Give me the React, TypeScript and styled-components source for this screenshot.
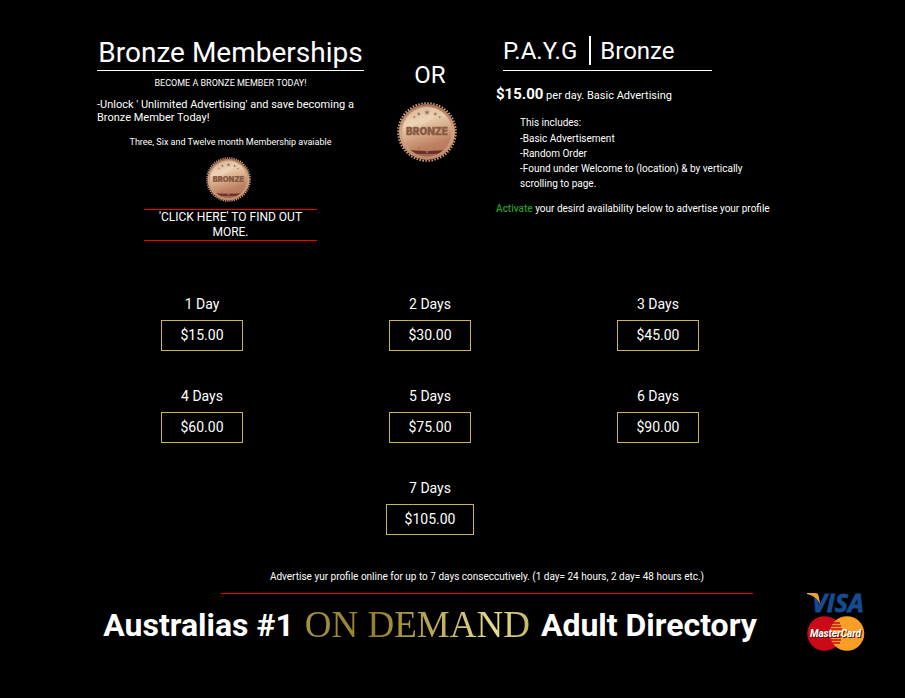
import React from "react";
import styled, { createGlobalStyle } from "styled-components";

const GlobalStyle = createGlobalStyle`
  *, *::before, *::after { box-sizing: border-box; }
  body {
    margin: 0;
    background: #000;
    color: #fff;
    font-family: Roboto, "Liberation Sans", sans-serif;
    font-size: 14px;
  }
  h1, h2, h3, p, ul { margin: 0; padding: 0; font-weight: 400; }
  ul { list-style: none; }
  svg { display: block; overflow: visible; }
`;

const Page = styled.div`
  display: grid;
  grid-template-columns: 88px minmax(0, 1fr) 133px;
  align-items: end;
  padding: 35px 0 45px;
`;

const Main = styled.main`
  grid-column: 2;
  padding-bottom: 8px;
`;

const Intro = styled.section`
  display: grid;
  grid-template-columns: minmax(0, 5fr) minmax(0, 2fr) minmax(0, 5fr);
  min-height: 259px;
`;

const Column = styled.div<{ $center?: boolean }>`
  display: flex;
  flex-direction: column;
  align-items: ${(p) => (p.$center ? "center" : "stretch")};
  padding: 0 9px;
`;

const Title = styled.h1`
  border-bottom: 1px solid #fff;
  font-size: 28px;
  line-height: 35px;
  text-align: center;
  white-space: nowrap;
`;

const Caption = styled.p<{ $top: number }>`
  margin-top: ${(p) => p.$top}px;
  font-size: 9px;
  line-height: 12px;
  text-align: center;
`;

const Pitch = styled.p`
  margin-top: 9px;
  font-size: 11px;
  line-height: 13px;
`;

const MedalSlot = styled.div<{ $top: number; $right: number }>`
  align-self: center;
  margin-top: ${(p) => p.$top}px;
  padding-right: ${(p) => p.$right}px;
`;

const MoreLink = styled.a`
  align-self: center;
  width: 65%;
  margin-top: 7px;
  border: solid #f00;
  border-width: 1px 0;
  color: #fff;
  font-size: 12px;
  line-height: 15px;
  text-align: center;
  text-decoration: none;
`;

const Or = styled.p`
  margin-top: 26px;
  font-size: 24px;
  line-height: 28px;
`;

const PlanTitle = styled.h2`
  display: flex;
  align-items: center;
  width: 209px;
  height: 36px;
  margin-left: 7px;
  padding-bottom: 4px;
  border-bottom: 1px solid #fff;
  font-size: 24px;
  line-height: 30px;
  white-space: nowrap;
`;

const Divider = styled.span`
  width: 2px;
  height: 29px;
  margin: 0 9px 0 12px;
  background: #fff;
`;

const Rate = styled.p`
  margin-top: 13px;
  font-size: 11px;
  line-height: 20px;
  strong { font-size: 15px; font-weight: 700; }
`;

const Includes = styled.div`
  margin: 9px 0 0 24px;
  font-size: 10px;
  line-height: 15px;
  ul { margin-top: 1px; }
`;

const Activate = styled.p`
  margin-top: 10px;
  font-size: 10px;
  line-height: 15px;
  white-space: nowrap;
  strong { color: #2a972a; font-weight: 500; }
`;

const Plans = styled.section`
  display: flex;
  flex-wrap: wrap;
  justify-content: center;
  row-gap: 35px;
`;

const Plan = styled.div`
  display: flex;
  flex: 0 0 33.333%;
  flex-direction: column;
  align-items: center;
  gap: 6px;
`;

const PlanName = styled.label`
  font-size: 14px;
  line-height: 20px;
`;

const PriceButton = styled.button`
  padding: 6px 18px;
  border: 1px solid #c9b458;
  background: #000;
  color: #fff;
  font: 14px/17px Roboto, "Liberation Sans", sans-serif;
  cursor: pointer;
`;

const Note = styled.p`
  width: 532px;
  max-width: 100%;
  margin: 34px 19px 12px auto;
  padding-bottom: 9px;
  border-bottom: 1px solid #f00;
  font-size: 10px;
  line-height: 15px;
  text-align: center;
`;

const Slogan = styled.h2`
  display: flex;
  align-items: center;
  justify-content: center;
  gap: 11px;
  font-size: 32px;
  font-weight: 700;
  line-height: 38px;
  white-space: nowrap;
`;

const Gold = styled.span`
  background: linear-gradient(90deg, #a8923e, #96802b 30%, #b8a755 55%, #e6dc91 85%, #c5b862);
  background-clip: text;
  -webkit-background-clip: text;
  color: transparent;
  font-family: "Liberation Serif", serif;
  font-size: 37px;
  font-weight: 400;
`;

const Payments = styled.aside`
  grid-column: 3;
  padding-left: 35px;
`;

const STAR = "M0-3.2 .8-1 3-1 1.2.4 1.9 2.6 0 1.3-1.9 2.6-1.2.4-3-1-.8-1Z";

function Medal({ size, id }: { size: number; id: string }) {
  return (
    <svg width={size} height={size} viewBox="0 0 60 60" role="img" aria-label="Bronze medal">
      <defs>
        <linearGradient id={`${id}-face`} x1="0.2" y1="0" x2="0.5" y2="1">
          <stop offset="0" stopColor="#c5997a" />
          <stop offset="0.3" stopColor="#e8cdb0" />
          <stop offset="0.5" stopColor="#dab18f" />
          <stop offset="0.8" stopColor="#bd8163" />
          <stop offset="1" stopColor="#b77757" />
        </linearGradient>
        <linearGradient id={`${id}-rim`} x1="0" y1="0" x2="0" y2="1">
          <stop offset="0" stopColor="#a96d50" />
          <stop offset="0.5" stopColor="#d9a986" />
          <stop offset="1" stopColor="#bd8465" />
        </linearGradient>
        <clipPath id={`${id}-clip`}>
          <circle cx="30" cy="30" r="24.5" />
        </clipPath>
      </defs>
      <circle cx="30" cy="30" r="28.8" fill="none" stroke="#d3a283" strokeWidth="2" strokeDasharray="1.5 1.516" />
      <circle cx="30" cy="30" r="28" fill={`url(#${id}-rim)`} />
      <circle cx="30" cy="30" r="25.3" fill={`url(#${id}-face)`} stroke="#b98567" strokeWidth="0.8" />
      <g clipPath={`url(#${id}-clip)`}>
        <path d="M4 25C12 29 33 25 43 6L30 3 4 13Z" fill="#f5e2c5" opacity="0.35" />
        <path d="M3 47Q30 51 57 47V60H3Z" fill="#672f2b" />
        <path d="M10 51Q30 53 50 51L45 55H15Z" fill="#9d6751" />
      </g>
      <circle cx="30" cy="30" r="25" fill="none" stroke="#edcfb3" strokeWidth="0.6" opacity="0.6" />
      <g fill="#a57455">
        <path d={STAR} transform="translate(30 10.5)" />
        <path d={STAR} transform="translate(21.8 12) scale(.7)" />
        <path d={STAR} transform="translate(38.2 12) scale(.7)" />
        <path d={STAR} transform="translate(17.3 15) scale(.5)" />
        <path d={STAR} transform="translate(42.7 15) scale(.5)" />
        <path d={STAR} transform="translate(30 50) scale(.6)" />
        <path d={STAR} transform="translate(22 46) scale(.4)" />
        <path d={STAR} transform="translate(38 46) scale(.4)" />
      </g>
      <text x="30" y="33" textAnchor="middle" fontFamily="Inter, sans-serif" fontWeight="900" fontSize="10" fill="#865a42" stroke="#865a42" strokeWidth="0.3">
        BRONZE
      </text>
    </svg>
  );
}

function CardLogos() {
  return (
    <svg width="58" height="60" viewBox="0 0 58 60" role="img" aria-label="Visa and MasterCard">
      <text x="5" y="20" fontFamily="Open Sans, sans-serif" fontWeight="700" fontStyle="italic" fontSize="25" fill="#164a91" stroke="#164a91" strokeWidth="0.8">
        VISA
      </text>
      <path d="M0 1H8Q11 1 11.5 4L13.5 13Q10 4 0 2Z" fill="#f2a32e" />
      <circle cx="17.5" cy="41.5" r="17.3" fill="#cb0a19" />
      <circle cx="40" cy="41.5" r="17.3" fill="#f99f27" />
      <path d="M24 31H33M23 34H34M23 37H35M23 45H35M23 48H34M24 51H33" stroke="#cb0a19" strokeWidth="1.3" />
      <g fontFamily="Roboto, sans-serif" fontWeight="700" fontStyle="italic" fontSize="10">
        <text x="29.5" y="46" textAnchor="middle" fill="#4b1a13">MasterCard</text>
        <text x="28.5" y="45" textAnchor="middle" fill="#fff">MasterCard</text>
      </g>
    </svg>
  );
}

const plans = [
  { days: "1 Day", price: "$15.00" },
  { days: "2 Days", price: "$30.00" },
  { days: "3 Days", price: "$45.00" },
  { days: "4 Days", price: "$60.00" },
  { days: "5 Days", price: "$75.00" },
  { days: "6 Days", price: "$90.00" },
  { days: "7 Days", price: "$105.00" },
];

export default function App() {
  return (
    <>
      <GlobalStyle />
      <Page>
        <Main>
          <Intro>
            <Column>
              <Title>Bronze Memberships</Title>
              <Caption $top={6}>BECOME A BRONZE MEMBER TODAY!</Caption>
              <Pitch>-Unlock ' Unlimited Advertising' and save becoming a Bronze Member Today!</Pitch>
              <Caption $top={12}>Three, Six and Twelve month Membership avaiable</Caption>
              <MedalSlot $top={9} $right={4}>
                <Medal size={45} id="medal-small" />
              </MedalSlot>
              <MoreLink href="#memberships">'CLICK HERE' TO FIND OUT MORE.</MoreLink>
            </Column>
            <Column $center>
              <Or>OR</Or>
              <MedalSlot $top={13} $right={6}>
                <Medal size={60} id="medal-large" />
              </MedalSlot>
            </Column>
            <Column>
              <PlanTitle>
                P.A.Y.G<Divider />Bronze
              </PlanTitle>
              <Rate>
                <strong>$15.00</strong> per day. Basic Advertising
              </Rate>
              <Includes>
                <p>This includes:</p>
                <ul>
                  <li>-Basic Advertisement</li>
                  <li>-Random Order</li>
                  <li>-Found under Welcome to (location) &amp; by vertically scrolling to page.</li>
                </ul>
              </Includes>
              <Activate>
                <strong>Activate</strong> your desird availability below to advertise your profile
              </Activate>
            </Column>
          </Intro>
          <Plans>
            {plans.map((plan, i) => (
              <Plan key={plan.days}>
                <PlanName htmlFor={`plan-${i}`}>{plan.days}</PlanName>
                <PriceButton id={`plan-${i}`} type="button">{plan.price}</PriceButton>
              </Plan>
            ))}
          </Plans>
          <Note>Advertise yur profile online for up to 7 days conseccutively. (1 day= 24 hours, 2 day= 48 hours etc.)</Note>
          <Slogan>
            <span>Australias #1</span>
            <Gold>ON DEMAND</Gold>
            <span>Adult Directory</span>
          </Slogan>
        </Main>
        <Payments>
          <CardLogos />
        </Payments>
      </Page>
    </>
  );
}
